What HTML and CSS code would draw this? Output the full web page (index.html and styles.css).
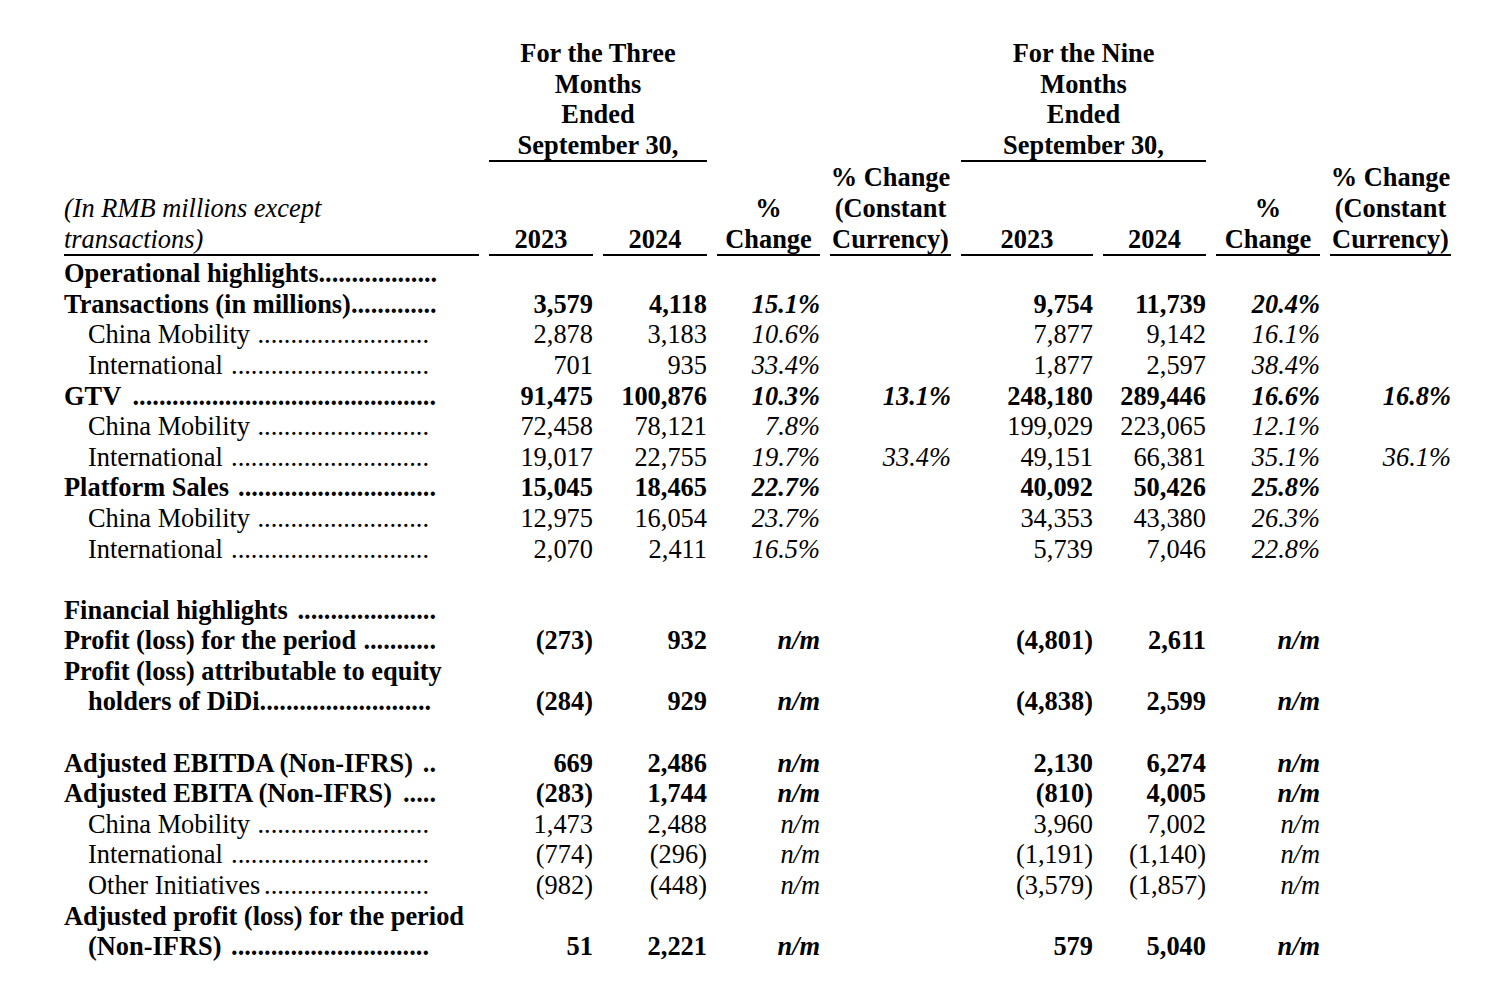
FILE: index.html
```html
<!DOCTYPE html>
<html lang="en">
<head>
<meta charset="utf-8">
<title>Operational and Financial Highlights</title>
<link rel="stylesheet" href="styles.css">
</head>
<body>
<table class="fin">
  <colgroup>
    <col class="c-label">
    <col class="c-num">
    <col class="c-num">
    <col class="c-pct">
    <col class="c-cc">
    <col class="c-num9">
    <col class="c-num9b">
    <col class="c-pct9">
    <col class="c-cc">
  </colgroup>
  <thead>
    <tr class="h1">
      <th></th>
      <th colspan="2" class="ul">For the Three<br>Months<br>Ended<br>September 30,</th>
      <th></th>
      <th></th>
      <th colspan="2" class="ul">For the Nine<br>Months<br>Ended<br>September 30,</th>
      <th></th>
      <th></th>
    </tr>
    <tr class="h2">
      <th class="ul unit">(In RMB millions except<br>transactions)</th>
      <th class="ul">2023</th>
      <th class="ul">2024</th>
      <th class="ul">%<br>Change</th>
      <th class="ul">% Change<br>(Constant<br>Currency)</th>
      <th class="ul">2023</th>
      <th class="ul">2024</th>
      <th class="ul">%<br>Change</th>
      <th class="ul">% Change<br>(Constant<br>Currency)</th>
    </tr>
  </thead>
  <tbody>
    <tr class="b first">
      <td><div class="lbl w-b"><span class="txt">Operational highlights</span><span class="lead">..................</span></div></td>
      <td></td><td></td><td></td><td></td><td></td><td></td><td></td><td></td>
    </tr>
    <tr class="b">
      <td><div class="lbl w-b"><span class="txt">Transactions (in millions)</span><span class="lead">.............</span></div></td>
      <td>3,579</td><td>4,118</td><td class="p">15.1%</td><td></td><td>9,754</td><td>11,739</td><td class="p">20.4%</td><td></td>
    </tr>
    <tr>
      <td><div class="lbl w-r sub"><span class="txt">China Mobility</span><span class="lead">..........................</span></div></td>
      <td>2,878</td><td>3,183</td><td class="p">10.6%</td><td></td><td>7,877</td><td>9,142</td><td class="p">16.1%</td><td></td>
    </tr>
    <tr>
      <td><div class="lbl w-r sub"><span class="txt">International</span><span class="lead">..............................</span></div></td>
      <td>701</td><td>935</td><td class="p">33.4%</td><td></td><td>1,877</td><td>2,597</td><td class="p">38.4%</td><td></td>
    </tr>
    <tr class="b">
      <td><div class="lbl w-b"><span class="txt">GTV</span><span class="lead">..............................................</span></div></td>
      <td>91,475</td><td>100,876</td><td class="p">10.3%</td><td class="p">13.1%</td><td>248,180</td><td>289,446</td><td class="p">16.6%</td><td class="p">16.8%</td>
    </tr>
    <tr>
      <td><div class="lbl w-r sub"><span class="txt">China Mobility</span><span class="lead">..........................</span></div></td>
      <td>72,458</td><td>78,121</td><td class="p">7.8%</td><td></td><td>199,029</td><td>223,065</td><td class="p">12.1%</td><td></td>
    </tr>
    <tr>
      <td><div class="lbl w-r sub"><span class="txt">International</span><span class="lead">..............................</span></div></td>
      <td>19,017</td><td>22,755</td><td class="p">19.7%</td><td class="p">33.4%</td><td>49,151</td><td>66,381</td><td class="p">35.1%</td><td class="p">36.1%</td>
    </tr>
    <tr class="b">
      <td><div class="lbl w-b"><span class="txt">Platform Sales</span><span class="lead">..............................</span></div></td>
      <td>15,045</td><td>18,465</td><td class="p">22.7%</td><td></td><td>40,092</td><td>50,426</td><td class="p">25.8%</td><td></td>
    </tr>
    <tr>
      <td><div class="lbl w-r sub"><span class="txt">China Mobility</span><span class="lead">..........................</span></div></td>
      <td>12,975</td><td>16,054</td><td class="p">23.7%</td><td></td><td>34,353</td><td>43,380</td><td class="p">26.3%</td><td></td>
    </tr>
    <tr>
      <td><div class="lbl w-r sub"><span class="txt">International</span><span class="lead">..............................</span></div></td>
      <td>2,070</td><td>2,411</td><td class="p">16.5%</td><td></td><td>5,739</td><td>7,046</td><td class="p">22.8%</td><td></td>
    </tr>
    <tr class="blank"><td colspan="9">&nbsp;</td></tr>
    <tr class="b">
      <td><div class="lbl w-b"><span class="txt">Financial highlights</span><span class="lead">.....................</span></div></td>
      <td></td><td></td><td></td><td></td><td></td><td></td><td></td><td></td>
    </tr>
    <tr class="b">
      <td><div class="lbl w-b"><span class="txt">Profit (loss) for the period</span><span class="lead">...........</span></div></td>
      <td>(273)</td><td>932</td><td class="p">n/m</td><td></td><td>(4,801)</td><td>2,611</td><td class="p">n/m</td><td></td>
    </tr>
    <tr class="b two">
      <td><div class="line">Profit (loss) attributable to equity</div><div class="lbl w-r sub"><span class="txt">holders of DiDi</span><span class="lead">..........................</span></div></td>
      <td>(284)</td><td>929</td><td class="p">n/m</td><td></td><td>(4,838)</td><td>2,599</td><td class="p">n/m</td><td></td>
    </tr>
    <tr class="blank"><td colspan="9">&nbsp;</td></tr>
    <tr class="b">
      <td><div class="lbl w-b"><span class="txt">Adjusted EBITDA (Non-IFRS)</span><span class="lead">..</span></div></td>
      <td>669</td><td>2,486</td><td class="p">n/m</td><td></td><td>2,130</td><td>6,274</td><td class="p">n/m</td><td></td>
    </tr>
    <tr class="b">
      <td><div class="lbl w-b"><span class="txt">Adjusted EBITA (Non-IFRS)</span><span class="lead">.....</span></div></td>
      <td>(283)</td><td>1,744</td><td class="p">n/m</td><td></td><td>(810)</td><td>4,005</td><td class="p">n/m</td><td></td>
    </tr>
    <tr>
      <td><div class="lbl w-r sub"><span class="txt">China Mobility</span><span class="lead">..........................</span></div></td>
      <td>1,473</td><td>2,488</td><td class="p">n/m</td><td></td><td>3,960</td><td>7,002</td><td class="p">n/m</td><td></td>
    </tr>
    <tr>
      <td><div class="lbl w-r sub"><span class="txt">International</span><span class="lead">..............................</span></div></td>
      <td>(774)</td><td>(296)</td><td class="p">n/m</td><td></td><td>(1,191)</td><td>(1,140)</td><td class="p">n/m</td><td></td>
    </tr>
    <tr>
      <td><div class="lbl w-r sub"><span class="txt">Other Initiatives</span><span class="lead">.........................</span></div></td>
      <td>(982)</td><td>(448)</td><td class="p">n/m</td><td></td><td>(3,579)</td><td>(1,857)</td><td class="p">n/m</td><td></td>
    </tr>
    <tr class="b two">
      <td><div class="line">Adjusted profit (loss) for the period</div><div class="lbl w-r sub"><span class="txt">(Non-IFRS)</span><span class="lead">..............................</span></div></td>
      <td>51</td><td>2,221</td><td class="p">n/m</td><td></td><td>579</td><td>5,040</td><td class="p">n/m</td><td></td>
    </tr>
  </tbody>
</table>
</body>
</html>
```

FILE: styles.css
```css
html, body {
  margin: 0;
  padding: 0;
  background: #fff;
}

body {
  padding-top: 38px;
  color: #000;
  font-family: "Liberation Serif", "Times New Roman", serif;
  font-size: 26.4px;
  line-height: 30.6px;
}

.fin {
  margin-left: 54px;
  width: 1407px;
  table-layout: fixed;
  border-collapse: separate;
  border-spacing: 10px 0;
}

.c-label { width: 415px; }
.c-num { width: 104px; }
.c-pct { width: 103px; }
.c-cc { width: 121px; }
.c-num9 { width: 132px; }
.c-num9b { width: 103px; }
.c-pct9 { width: 104px; }

.fin th,
.fin td {
  padding: 0;
  line-height: 30.6px;
}

.fin th {
  font-weight: bold;
  text-align: center;
  vertical-align: bottom;
  white-space: nowrap;
}

.fin th.ul {
  border-bottom: 2px solid #000;
}

.fin th.unit {
  text-align: left;
  font-weight: normal;
  font-style: italic;
}

.fin td {
  text-align: right;
  vertical-align: bottom;
  white-space: nowrap;
}

.fin td:first-child {
  text-align: left;
}

.fin tr.b td {
  font-weight: bold;
}

.fin tr.first td {
  padding-top: 2px;
}

.fin td.p {
  font-style: italic;
}

.lbl {
  display: flex;
  box-sizing: border-box;
}

.lbl.w-b { width: 372px; }
.lbl.w-r { width: 365px; }

.lbl.sub {
  padding-left: 24px;
}

.lbl .txt {
  flex: none;
  white-space: nowrap;
}

.lead {
  flex: none;
  margin-left: auto;
  white-space: nowrap;
}

.line {
  white-space: nowrap;
}
```
